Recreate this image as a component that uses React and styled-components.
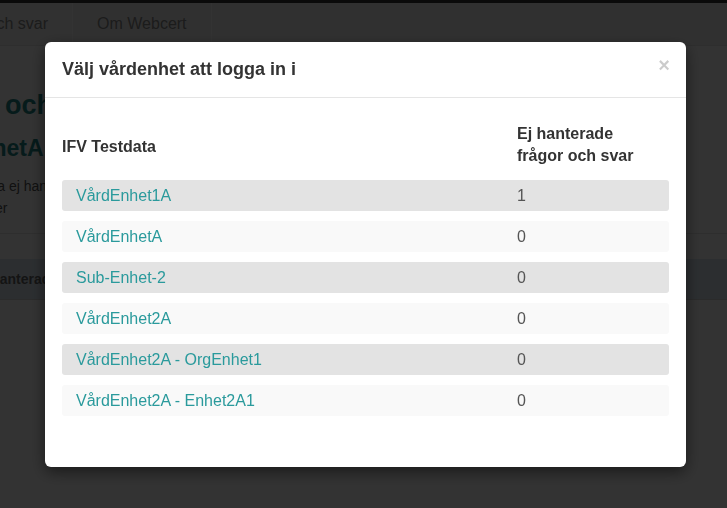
import styled, {createGlobalStyle} from "styled-components";

const GlobalStyle = createGlobalStyle`
  html, body {
    margin: 0;
    padding: 0;
    overflow: hidden;
    background: #fff;
    font-family: "Liberation Sans", Arial, sans-serif;
  }
`

// the page behind the dialog is scrolled a little to the right
const Page = styled.div`
  width: 900px;
  height: 508px;
  margin-left: -96px;
  display: flex;
  flex-direction: column;
`

const TopBar = styled.div`
  height: 3px;
  background: #333;
`

const Nav = styled.div`
  display: flex;
  height: 42px;
  background: #f1f1f1;
  border-bottom: 1px solid #e4e4e4;
`

const NavTab = styled.div`
  display: flex;
  align-items: center;
  padding: ${p => (p.$active ? "0 24px 0 32px" : "0 24px")};
  font-size: 16px;
  color: #8a8a8a;
  border-right: 1px solid #fff;
  background: ${p => (p.$active ? "#f4f4f4" : "transparent")};
`

const Content = styled.div`
  padding: 42px 0 0 8px;
`

const Heading = styled.h1`
  margin: 0;
  font-size: 27px;
  font-weight: bold;
  color: #1e8585;
  line-height: 34px;
`

const SubHeading = styled.h2`
  margin: 11px 0 0;
  font-size: 23px;
  font-weight: bold;
  color: #1e8585;
  line-height: 30px;
`

const Intro = styled.p`
  margin: 12px 0 0;
  padding-left: 9px;
  font-size: 14px;
  line-height: 22px;
  color: #555;
`

const Rule = styled.div`
  margin-top: 14px;
  border-top: 1px solid #e6e6e6;
`

const Band = styled.div`
  margin-top: 25px;
  height: 40px;
  display: flex;
  align-items: center;
  padding-left: 70px;
  background: #dce7f1;
  border-bottom: 1px solid #d6d6d6;
  font-size: 14px;
  font-weight: bold;
  color: #666;
`

const Backdrop = styled.div`
  position: fixed;
  inset: 0;
  background: rgba(0, 0, 0, 0.8);
  padding-top: 42px;
`

const Modal = styled.div`
  width: 641px;
  margin-left: 45px;
  background: #fff;
  border-radius: 6px;
  box-shadow: 0 5px 15px rgba(0, 0, 0, 0.5);
`

const ModalHeader = styled.div`
  display: flex;
  justify-content: space-between;
  align-items: flex-start;
  padding: 15px 17px;
  border-bottom: 1px solid #e5e5e5;
`

const ModalTitle = styled.h4`
  margin: 0;
  font-size: 18px;
  font-weight: bold;
  line-height: 25px;
  color: #333;
`

const Close = styled.button`
  border: none;
  background: none;
  padding: 0;
  margin-right: -1px;
  font-family: "Liberation Sans", Arial, sans-serif;
  font-size: 20px;
  font-weight: bold;
  line-height: 17px;
  color: #000;
  opacity: 0.2;
  cursor: pointer;
`

const ModalBody = styled.div`
  padding: 25px 17px 51px;
`

const Grid = styled.div`
  display: grid;
  grid-template-columns: 455px 1fr;
  row-gap: 10px;
`

const HeadCell = styled.div`
  display: flex;
  align-items: center;
  font-size: 16px;
  font-weight: bold;
  line-height: 22px;
  color: #333;
  margin-bottom: 3px;
  padding-top: ${p => (p.$shift ? "3px" : "0")};
`

const Cell = styled.div`
  height: 31px;
  display: flex;
  align-items: center;
  font-size: 16px;
  background: ${p => (p.$odd ? "#e3e3e3" : "#f9f9f9")};
  padding-left: ${p => (p.$first ? "14px" : "0")};
  border-radius: ${p => (p.$first ? "3px 0 0 3px" : "0 3px 3px 0")};
  color: ${p => (p.$first ? "#2a9a9c" : "#555")};
`

const UnitLink = styled.a`
  color: inherit;
  text-decoration: none;
  cursor: pointer;
`

const units = [
    {name: "VårdEnhet1A", count: 1},
    {name: "VårdEnhetA", count: 0},
    {name: "Sub-Enhet-2", count: 0},
    {name: "VårdEnhet2A", count: 0},
    {name: "VårdEnhet2A - OrgEnhet1", count: 0},
    {name: "VårdEnhet2A - Enhet2A1", count: 0},
];

const App = () => {
    return (
        <>
            <GlobalStyle/>
            <Page>
                <TopBar/>
                <Nav>
                    <NavTab $active>Frågor och svar</NavTab>
                    <NavTab>Om Webcert</NavTab>
                </Nav>
                <Content>
                    <Heading>Frågor och svar</Heading>
                    <SubHeading>VårdEnhetA</SubHeading>
                    <Intro>
                        Här visas alla ej hanterade<br/>
                        på de enheter
                    </Intro>
                </Content>
                <Rule/>
                <Band>Ej hanterade</Band>
            </Page>

            <Backdrop>
                <Modal>
                    <ModalHeader>
                        <ModalTitle>Välj vårdenhet att logga in i</ModalTitle>
                        <Close aria-label="Stäng">×</Close>
                    </ModalHeader>
                    <ModalBody>
                        <Grid>
                            <HeadCell $shift>IFV Testdata</HeadCell>
                            <HeadCell>Ej hanterade<br/>frågor och svar</HeadCell>
                            {units.map((u, i) => (
                                <>
                                    <Cell key={u.name} $first $odd={i % 2 === 0}>
                                        <UnitLink>{u.name}</UnitLink>
                                    </Cell>
                                    <Cell key={u.name + "-n"} $odd={i % 2 === 0}>{u.count}</Cell>
                                </>
                            ))}
                        </Grid>
                    </ModalBody>
                </Modal>
            </Backdrop>
        </>
    )
}

export default App
